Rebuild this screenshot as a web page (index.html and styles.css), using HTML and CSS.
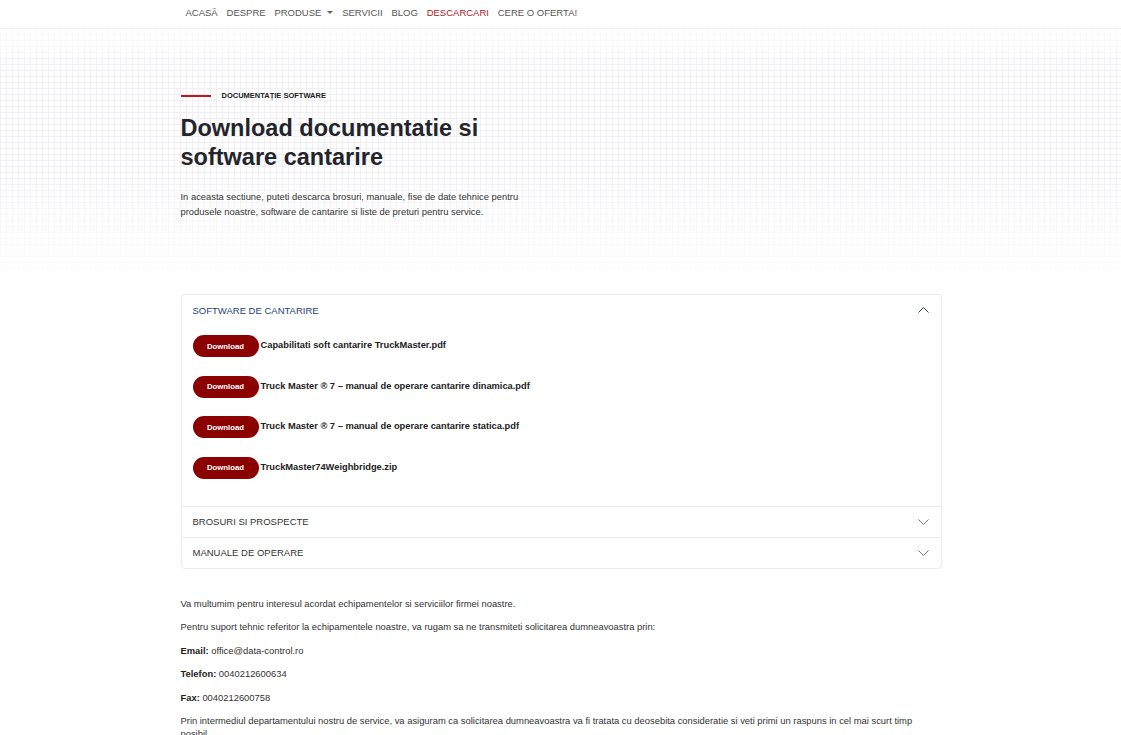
FILE: index.html
```html
<!DOCTYPE html>
<html lang="ro">

<head>
  <meta charset="UTF-8" />
  <meta name="viewport" content="width=device-width, initial-scale=1.0" />
  <title>Descarcari - Data Control</title>
  <link rel="stylesheet" href="styles.css">
</head>

<body>
  <nav class="topnav">
    <ul class="menu">
      <li><a href="#">Acasă</a></li>
      <li><a href="#">Despre</a></li>
      <li><a href="#" class="has-caret">Produse</a></li>
      <li><a href="#">Servicii</a></li>
      <li><a href="#">Blog</a></li>
      <li><a href="#" class="active">Descarcari</a></li>
      <li><a href="#">Cere o oferta!</a></li>
    </ul>
  </nav>

  <section class="hero">
    <div class="container">
      <div class="eyebrow">
        <span class="eyebrow-line"></span>
        <span class="eyebrow-text">Documentație software</span>
      </div>
      <h1>Download documentatie si software cantarire</h1>
      <p class="lead">In aceasta sectiune, puteti descarca brosuri, manuale, fise de date tehnice pentru produsele noastre, software de cantarire si liste de preturi pentru service.</p>
    </div>
  </section>

  <div class="container">
    <div class="accordion">
      <div class="acc-item open">
        <div class="acc-head">
          <span>Software de cantarire</span>
          <svg class="chev" width="11" height="6" viewBox="0 0 11 6"><polyline points="0.5,5.5 5.5,0.5 10.5,5.5" fill="none" stroke="currentColor" stroke-width="1" /></svg>
        </div>
        <div class="acc-body">
          <div class="file-row">
            <a href="#" class="btn-download">Download</a>
            <span class="file-name">Capabilitati soft cantarire TruckMaster.pdf</span>
          </div>
          <div class="file-row">
            <a href="#" class="btn-download">Download</a>
            <span class="file-name">Truck Master ® 7 – manual de operare cantarire dinamica.pdf</span>
          </div>
          <div class="file-row">
            <a href="#" class="btn-download">Download</a>
            <span class="file-name">Truck Master ® 7 – manual de operare cantarire statica.pdf</span>
          </div>
          <div class="file-row">
            <a href="#" class="btn-download">Download</a>
            <span class="file-name">TruckMaster74Weighbridge.zip</span>
          </div>
        </div>
      </div>
      <div class="acc-item">
        <div class="acc-head">
          <span>Brosuri si prospecte</span>
          <svg class="chev" width="11" height="6" viewBox="0 0 11 6"><polyline points="0.5,0.5 5.5,5.5 10.5,0.5" fill="none" stroke="currentColor" stroke-width="1" /></svg>
        </div>
      </div>
      <div class="acc-item">
        <div class="acc-head">
          <span>Manuale de operare</span>
          <svg class="chev" width="11" height="6" viewBox="0 0 11 6"><polyline points="0.5,0.5 5.5,5.5 10.5,0.5" fill="none" stroke="currentColor" stroke-width="1" /></svg>
        </div>
      </div>
    </div>

    <div class="contact">
      <p>Va multumim pentru interesul acordat echipamentelor si serviciilor firmei noastre.</p>
      <p>Pentru suport tehnic referitor la echipamentele noastre, va rugam sa ne transmiteti solicitarea dumneavoastra prin:</p>
      <p><strong>Email:</strong> office@data-control.ro</p>
      <p><strong>Telefon:</strong> 0040212600634</p>
      <p><strong>Fax:</strong> 0040212600758</p>
      <p>Prin intermediul departamentului nostru de service, va asiguram ca solicitarea dumneavoastra va fi tratata cu deosebita consideratie si veti primi un raspuns in cel mai scurt timp posibil.</p>
    </div>
  </div>
</body>

</html>
```

FILE: styles.css
```css
body {
  margin: 0;
  padding: 0;
  font-family: 'Liberation Sans', Arial, sans-serif;
  background-color: #fff;
  color: #333;
}

a {
  text-decoration: none;
  color: inherit;
}

.container {
  width: 761px;
  margin: 0 auto;
  padding-left: 1px;
}

/* top navigation */
.topnav {
  height: 28px;
  border-bottom: 1px solid #eeeef2;
  background: #fff;
}

.menu {
  width: 756px;
  margin: 0 auto;
  padding: 0 0 0 6px;
  list-style: none;
  display: flex;
  gap: 8.8px;
  height: 100%;
  align-items: center;
}

.menu a {
  font-size: 9.5px;
  text-transform: uppercase;
  color: #555;
  display: flex;
  align-items: center;
  padding-bottom: 4px;
}

.menu a.active {
  color: #b3161c;
}

.has-caret::after {
  content: '';
  display: inline-block;
  margin-left: 6px;
  border-left: 3px solid transparent;
  border-right: 3px solid transparent;
  border-top: 3px solid #666;
}

/* hero with grid */
.hero {
  padding: 62px 0 62px;
  background:
    linear-gradient(to bottom, rgba(255, 255, 255, 0.7) 0%, rgba(255, 255, 255, 0) 18%, rgba(255, 255, 255, 0) 55%, #fff 100%),
    repeating-linear-gradient(90deg, #f0f0f4 0 1px, transparent 1px 6px),
    repeating-linear-gradient(0deg, #f0f0f4 0 1px, transparent 1px 6px);
}

.eyebrow {
  display: flex;
  align-items: center;
  gap: 11px;
}

.eyebrow-line {
  width: 30px;
  height: 2px;
  background: #c0161c;
}

.eyebrow-text {
  font-size: 7.5px;
  font-weight: bold;
  text-transform: uppercase;
  color: #222;
}

.hero h1 {
  font-size: 23.5px;
  line-height: 29px;
  font-weight: bold;
  color: #24252a;
  margin: 14px 0 0;
  max-width: 370px;
}

.lead {
  font-size: 9.4px;
  line-height: 15px;
  color: #333;
  margin: 17px 0 0;
  max-width: 370px;
}

/* accordion */
.accordion {
  margin-top: 13px;
  border: 1px solid #ececf0;
  border-radius: 4px;
}

.acc-item + .acc-item {
  border-top: 1px solid #ececf0;
}

.acc-head {
  display: flex;
  align-items: center;
  justify-content: space-between;
  height: 30px;
  padding: 0 12px 0 11px;
  font-size: 9.5px;
  text-transform: uppercase;
  color: #333;
}

.acc-head .chev {
  color: #777;
}

.open .acc-head {
  color: #1d3f7a;
}

.open .acc-head .chev {
  color: #1d3f7a;
}

.acc-body {
  padding: 10px 11px 27px;
  display: flex;
  flex-direction: column;
  gap: 18.5px;
}

.file-row {
  display: flex;
  align-items: center;
  gap: 2px;
}

.btn-download {
  width: 66px;
  height: 22px;
  border-radius: 11px;
  background: #8b0000;
  color: #fff;
  font-size: 7.8px;
  font-weight: bold;
  display: flex;
  align-items: center;
  justify-content: center;
}

.file-name {
  font-size: 9.3px;
  font-weight: bold;
  color: #222;
  margin-top: -2px;
}

/* contact text */
.contact {
  margin-top: 28px;
  font-size: 9.4px;
  line-height: 13px;
  color: #333;
}

.contact p {
  margin: 0 0 10.5px;
}

.contact strong {
  color: #222;
}
```
